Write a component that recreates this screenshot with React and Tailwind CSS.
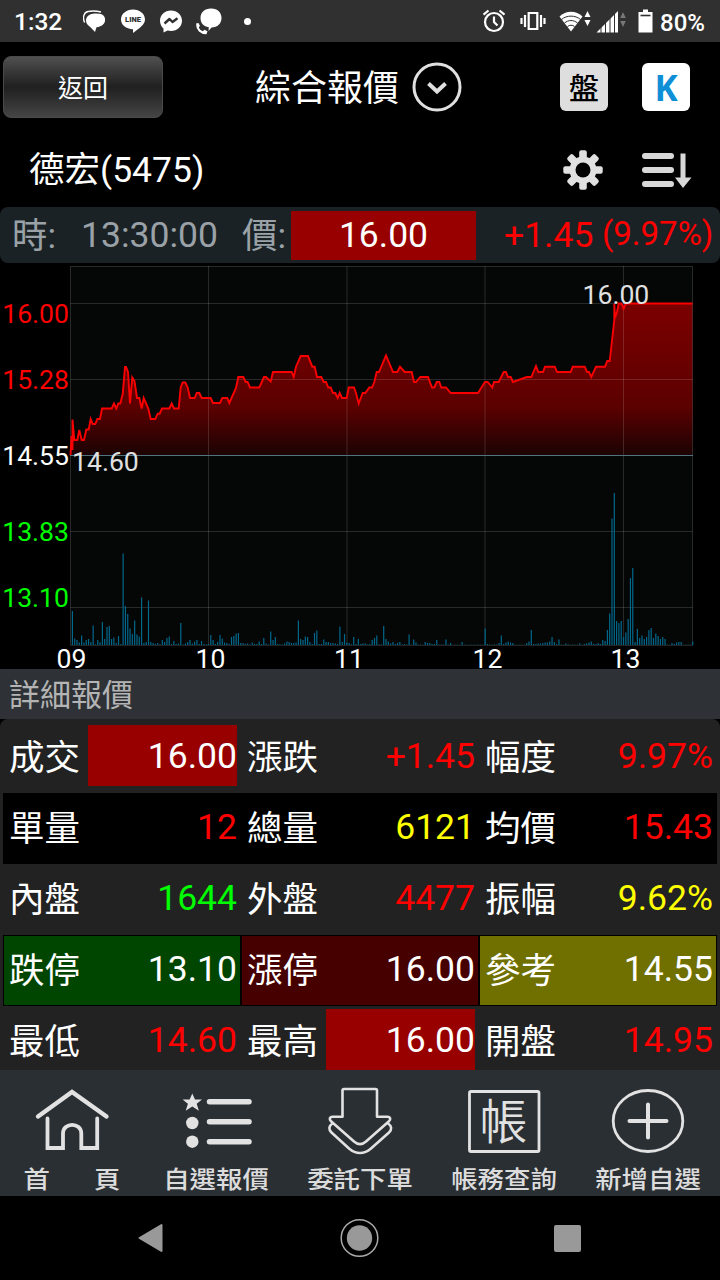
const FONT = "font-[Roboto,'Noto_Sans_CJK_TC',sans-serif]";

const PRICE_LINE =
  '70.5,455 71.5,436 72.5,450 72.5,419.5 74.3,440 77.3,440 79.3,430 81.7,440 84,440 86.3,429.5 88.7,429.5 90.7,419 92.7,424 95.3,424 97.3,419 100,419 ' +
  '102,408.5 111.7,408.5 114,403.5 116.3,408.5 118.3,403.5 120.3,403.5 122.7,394 125,367 126,367 128,372 130,403.5 132.3,377.5 134.5,381 137,398 139.3,398 ' +
  '141.7,408.5 143.7,398 148.3,408.5 150.7,419 155.3,419 157.7,413.7 159.7,413.7 162,408.5 169.3,408.5 171.7,403.5 174,408.5 178.7,408.5 180.7,387.5 ' +
  '182.7,382.5 185.3,382.5 187.7,387.5 190,398 194.7,398 196.7,393 199.3,393 201.7,398 210.7,398 213,403 220,403 222.3,398 227.3,398 229.3,403 236,388 ' +
  '238.3,377 243.3,377 245.7,382 247.7,382 250,387.5 259.3,387.5 264,377 266,377 270.7,381.5 273,372 291.7,372 293.7,377 296,366.7 300.7,356 308,356 ' +
  '312.3,366.7 314.7,366.7 317,377 321.3,377 323.7,382 326,382 328.3,387.5 330.7,387.5 333,393 335.3,393 337.7,398 339.7,393 342,398 346.7,398 ' +
  '348.7,387.5 354,387.5 356,393 358.7,403.5 360,400 362.7,393 365.3,393 369.3,387.5 372,387.5 374.3,382 376.7,372 379,372 386,355.5 393,372 397.3,372 ' +
  '400,366.7 404.7,372 411.7,372 414,382 416,382 420.3,377 428,377 432,387.5 434.3,387.5 436.7,382 439.3,382 441.3,387.5 446,387.5 450.7,393 478,393 ' +
  '485,382 487.7,382 492.3,387.5 494,382 498.7,382 503.7,372 506,372 508,377 510.7,377 513,382 526.7,377 531.3,377 536,366 538.3,372 543,372 545,366.7 ' +
  '554.7,366.7 557,372 570.7,372 572.7,366.7 584.7,366.7 587,372 589,372 591.3,377 596,366.7 605,366.7 607.3,361 609.7,361 614.3,320 614.3,303.5 ' +
  '615,318 617,311.7 618.7,303.5 621.5,303.5 623.7,308.5 625.7,303.5 692.5,303.5';

// one value per minute, 09:01 to 13:30
const VOLUME = [
  34, 6.5, 5, 2.5, 9.5, 2.5, 5, 6, 3, 19.5, 0.7, 5, 2.7, 23, 6, 18, 19, 6, 7.5, 2,
  9, 1, 91.5, 39, 31, 16.5, 11, 24.5, 10.5, 8.5, 47.5, 2, 3, 44.5, 3, 2, 1, 2, 0.7, 5,
  3, 7, 8.5, 1, 4, 1, 1.5, 22, 0.5, 1.5, 3, 5, 1.5, 3.3, 5, 1, 4, 1, 0.7, 1,
  10, 5, 1, 3, 10, 6.5, 2.5, 2, 1, 8, 9, 11.5, 12, 2, 2, 1, 1.5, 0.5, 2.5, 1,
  1, 3.5, 1, 7, 1.5, 0.5, 13.5, 5, 8, 1, 0.7, 0.5, 1.5, 3.5, 3, 2, 2, 2.5, 24.5, 6,
  5, 8.5, 8, 3, 1, 12, 14.5, 1, 1, 5.5, 3, 3, 2, 2, 1.5, 1, 18.5, 3, 11, 2.5,
  2, 0.7, 8, 1, 6, 1, 1.5, 1.5, 0.5, 1, 5, 7, 9.5, 0.7, 0.5, 19, 6, 3.5, 1.5, 3,
  1, 2, 3, 0.5, 1, 0.5, 10.5, 0.5, 5.5, 2.5, 0.5, 0.5, 0.3, 3, 2, 2, 1, 1, 5, 0.5,
  0.5, 0.5, 5.5, 0.5, 2, 0.3, 0.3, 0.3, 0.3, 3, 0.3, 0.3, 0.3, 0.3, 0.3, 0.3, 0.5, 0.3, 0.3, 16.5,
  1, 0.5, 0.3, 0.7, 0.5, 2, 9.5, 1, 2.5, 3.5, 2.5, 2, 0.3, 0.3, 0.3, 0.3, 0.3, 2, 3.5, 15,
  1, 1, 1.5, 1.5, 2, 2.5, 2.5, 3.5, 8, 3, 1, 5.5, 0.5, 0.3, 1.5, 0.7, 0.3, 0.5, 0.3, 0.3,
  1.5, 0.3, 1, 1.5, 2.5, 3.5, 1, 1, 2, 1, 5, 4, 15, 31.5, 126.5, 152, 24, 22, 24, 8,
  12.5, 26, 67, 77, 3, 16, 7, 9.5, 6, 8, 15, 17, 7, 11.5, 9, 6, 8, 6, 0.5, 0.3,
  2, 1, 2.5, 3, 3, 0.3, 0.3, 0.3, 0.3, 3.5,
];

const PRICE_LABELS = [
  { text: '16.00', y: 323.3, color: '#ff0000' },
  { text: '15.28', y: 389, color: '#ff0000' },
  { text: '14.55', y: 465.3, color: '#ffffff' },
  { text: '13.83', y: 540.5, color: '#00ff00' },
  { text: '13.10', y: 607.3, color: '#00ff00' },
];

const HOURS = [
  { text: '09', x: 71.5 },
  { text: '10', x: 210.5 },
  { text: '11', x: 349 },
  { text: '12', x: 487.5 },
  { text: '13', x: 625.5 },
];

const RED = 'text-[#ff0000]';
const GREEN = 'text-[#00ff00]';
const YELLOW = 'text-[#ffff00]';
const WHITE = 'text-white';

const ROWS = [
  [
    { label: '成交', value: '16.00', color: WHITE, hit: true },
    { label: '漲跌', value: '+1.45', color: RED },
    { label: '幅度', value: '9.97%', color: RED },
  ],
  [
    { label: '單量', value: '12', color: RED },
    { label: '總量', value: '6121', color: YELLOW },
    { label: '均價', value: '15.43', color: RED },
  ],
  [
    { label: '內盤', value: '1644', color: GREEN },
    { label: '外盤', value: '4477', color: RED },
    { label: '振幅', value: '9.62%', color: YELLOW },
  ],
  [
    { label: '跌停', value: '13.10', color: WHITE, bg: 'bg-[#004500]' },
    { label: '漲停', value: '16.00', color: WHITE, bg: 'bg-[#460000]' },
    { label: '參考', value: '14.55', color: WHITE, bg: 'bg-[#707000]' },
  ],
  [
    { label: '最低', value: '14.60', color: RED },
    { label: '最高', value: '16.00', color: WHITE, hit: true },
    { label: '開盤', value: '14.95', color: RED },
  ],
];

function StatusBar() {
  return (
    <div className="h-[42px] shrink-0 bg-[#303030] flex items-center justify-between px-[14px] text-white font-medium">
      <div className="flex items-center">
        <span className="text-[24.5px] leading-none w-[69px] pt-[3px]">1:32</span>
        <svg width="23" height="23" viewBox="0 0 23 23" fill="#fff">
          <path d="M1.600 12.500C-.5 8 .5 2.500 5 1.500c4-.8 8-.8 13 .5" fill="none" stroke="#fff" strokeWidth="1.400" />
          <path d="M10 3.700c2.500-.5 5.500-.4 8 .4 3 1 4.300 3.600 4.100 6.200-.2 3.300-3 6.400-8.600 7l-1.500 4.700-4.800-5C4.500 15.300 3 13.400 3 10.600c0-3.600 2.700-6.400 7-6.900z" />
        </svg>
        <svg width="26" height="26" viewBox="0 0 26 26" className="ml-[14px]">
          <path d="M13 1.500c6.800 0 12 4.400 12 10 0 5-5.500 8.800-12 13.500v-3.800C6 21 1 17 1 11.500c0-5.600 5.200-10 12-10z" fill="#fff" />
          <text x="13" y="14.200" textAnchor="middle" fontSize="7.500" fontWeight="900" fill="#303030">LINE</text>
        </svg>
        <svg width="24" height="24" viewBox="0 0 24 24" className="ml-[13px]">
          <path d="M12 1.500c6.300 0 11 4.500 11 10.300S18.300 22 12 22c-1.200 0-2.300-.2-3.400-.5L4.500 23.500v-4C2.300 17.600 1 15 1 11.800 1 6 5.700 1.500 12 1.500z" fill="#fff" />
          <path d="M5.500 14.500l5-4.500 3 3 5-3.700" fill="none" stroke="#303030" strokeWidth="2.400" strokeLinejoin="round" />
        </svg>
        <svg width="28" height="28" viewBox="0 0 28 28" className="ml-[12px]">
          <path d="M16 1.500h.5c6 0 10 4 10 9.500s-4 9.500-10 9.500l-3 3.500.3-3.700C8.500 19.500 5.500 16 5.500 11c0-5.500 4-9.500 10.500-9.500z" fill="#fff" />
          <path d="M2.300 17.500c0 5 3.500 8.500 9 8.500" fill="none" stroke="#fff" strokeWidth="2.400" />
          <path d="M1 16.500l2.500-.5 1.500 3-2 2zM7.500 24.500l2-1.700 3 1.500-1 2.700z" fill="#fff" />
        </svg>
        <span className="ml-[21px] size-[7px] rounded-full bg-white" />
      </div>
      <div className="flex items-center">
        <svg width="24" height="24" viewBox="0 0 24 24" fill="none" stroke="#fff" strokeWidth="2.200">
          <circle cx="12" cy="13" r="9" />
          <path d="M12 7.500V13l3.500 3.500M1.500 5.700L6.500 1.500M22.500 5.700L17.500 1.500" />
        </svg>
        <svg width="26" height="20" viewBox="0 0 26 20" fill="none" stroke="#fff" strokeWidth="2.200" className="ml-[14px]">
          <path d="M8.700 2h8.600v16H8.700zM5 4v12M1.500 7v6M21 4v12M24.500 7v6" />
        </svg>
        <svg width="32" height="22" viewBox="0 0 32 22" className="ml-[13px]">
          <path d="M12 21.500L0.500 6.500C6.500 0 17.500 0 23.500 6.500z" fill="#fff" />
          <path d="M2.500 9.500c5-4.500 14-4.500 19 0M5.500 13c4-3.300 9-3.300 13 0M8.500 16.500c2-1.700 5-1.700 7 0" fill="none" stroke="#303030" strokeWidth="1" />
          <path d="M28.500 1l3 6h-6zM28.500 16l3-6h-6z" fill="#fff" />
        </svg>
        <svg width="30" height="23" viewBox="0 0 30 23" className="ml-[5px]">
          <path d="M0.500 22.500L22 1v21.500z" fill="#fff" />
          <path d="M5 10v13M9.500 8v15M14 4v19M18.500 2v21" stroke="#303030" strokeWidth="1" />
          <path d="M27 2l2.800 6h-5.600zM27 17l2.800-6h-5.600z" fill="#777" />
        </svg>
        <svg width="15" height="24" viewBox="0 0 15 24" className="ml-[12px]">
          <path d="M5 0.500h5V3h4.500v20.500h-14V3H5z" fill="#fff" />
          <path d="M2.500 6.500h10" stroke="#303030" strokeWidth="1.600" />
        </svg>
        <span className="ml-[7px] mr-px text-[24px] leading-none pt-[3px]">80%</span>
      </div>
    </div>
  );
}

function Header() {
  return (
    <div className="h-[90px] shrink-0 flex items-center pl-[3px] pr-[30px] text-white">
      <button className="w-[160px] h-[62px] rounded-lg border border-[#4a4a4a] bg-linear-to-b from-[#505050] via-[#202020] to-[#454545] text-[25px] font-normal pt-[3px]">
        返回
      </button>
      <h1 className="ml-[92px] mt-[3px] text-[36px] leading-none">綜合報價</h1>
      <svg width="50" height="50" viewBox="0 0 50 50" fill="none" stroke="#e0e0e0" className="ml-[13px]">
        <circle cx="25" cy="25" r="23" strokeWidth="3" />
        <path d="M16.500 21.500l8.500 8 8.500-8" strokeWidth="4" />
      </svg>
      <div className="ml-auto size-[48px] rounded-md bg-[#dedede] text-black text-[30px] font-medium flex items-center justify-center leading-none pt-[3px]">
        盤
      </div>
      <div className="ml-[34px] size-[48px] rounded-md bg-white text-[#0f8fd6] text-[35px] font-bold font-['Open_Sans',sans-serif] flex items-center justify-center leading-none">
        K
      </div>
    </div>
  );
}

function StockTitle() {
  const teeth = [0, 45, 90, 135];
  return (
    <div className="h-[75px] shrink-0 flex items-center pl-[29px] pr-[28px] text-white">
      <h2 className="text-[35.500px] leading-none mt-[3px]">德宏(5475)</h2>
      <svg width="40" height="40" viewBox="-20 -20 40 40" className="ml-auto">
        {teeth.map((deg) => (
          <rect key={deg} x="-3.800" y="-19.700" width="7.600" height="39.400" rx="2" fill="#e0e0e0" transform={`rotate(${deg})`} />
        ))}
        <circle r="13.500" fill="#e0e0e0" />
        <circle r="7.500" fill="#000" />
      </svg>
      <svg width="51" height="38" viewBox="0 0 51 38" className="ml-[38px]">
        <path d="M4 5h26M4 19h26M4 33h26" stroke="#d8d8d8" strokeWidth="6" strokeLinecap="round" />
        <path d="M39.500 2.500h5v24h6l-8.500 10.500-8-10.500h5.500z" fill="#d8d8d8" />
      </svg>
    </div>
  );
}

function PriceBar() {
  return (
    <div className="h-[56px] shrink-0 rounded-lg bg-[#1b2226] flex items-center text-[35.500px] leading-none text-[#9aa2a8]">
      <span className="ml-[12px] w-[69px] pt-[3px]">時:</span>
      <span className="w-[161px] pt-[2px]">13:30:00</span>
      <span className="w-[49px] pt-[3px]">價:</span>
      <span className="w-[185px] h-[49px] pt-px bg-[#980000] text-white flex items-center justify-center">16.00</span>
      <span className="ml-[28px] w-[98px] pt-[2px] text-[#ff0000]">+1.45</span>
      <span className="text-[#ff0000] text-[33px] pb-1">(9.97%)</span>
    </div>
  );
}

function Chart() {
  return (
    <svg width="720" height="406" viewBox="0 263 720 406" className="shrink-0 block overflow-visible" fontSize="26.600">
      <defs>
        <linearGradient id="area" gradientUnits="userSpaceOnUse" x1="0" y1="303" x2="0" y2="455">
          <stop offset="0" stopColor="#7c0000" />
          <stop offset="0.680" stopColor="#5c0000" />
          <stop offset="1" stopColor="#1c0303" />
        </linearGradient>
      </defs>
      <rect x="70" y="266" width="623" height="379" fill="#050606" />
      <polygon points={`${PRICE_LINE} 692.5,455 70.5,455`} fill="url(#area)" />
      <path
        d="M70.500 266.500H692.500V645.500H70.500zM70.500 303.500H692.500M70.500 379.500H692.500M70.500 531.500H692.500M70.500 607.500H692.500M208.500 266V645M347 266V645M485 266V645M623.500 266V645"
        fill="none"
        stroke="#fff"
        strokeOpacity="0.140"
      />
      <path d="M70 455.500H693" stroke="#4f7480" />
      {VOLUME.map((v, i) => (
        <rect key={i} x={71.8 + i * 2.306} y={645 - v} width="1.200" height={v} fill="#00688c" />
      ))}
      <polyline points={PRICE_LINE} fill="none" stroke="#fa0000" strokeWidth="1.900" />
      {PRICE_LABELS.map((l) => (
        <text key={l.text} x="69" y={l.y} textAnchor="end" fill={l.color}>{l.text}</text>
      ))}
      <text x="72" y="470.500" fill="#e0e0e0">14.60</text>
      <text x="582.500" y="303.500" fill="#e0e0e0">16.00</text>
      {HOURS.map((h) => (
        <text key={h.text} x={h.x} y="667.500" textAnchor="middle" fill="#fff">{h.text}</text>
      ))}
    </svg>
  );
}

function QuoteTable() {
  return (
    <div className="h-[351px] shrink-0 overflow-hidden rounded-t-lg bg-[#222] px-[3px] pt-[3px]">
      {ROWS.map((row, i) => (
        <div key={i} className={`grid grid-cols-3 h-[71px] ${i === 1 ? 'bg-black' : ''}`}>
          {row.map((cell) => (
            <div
              key={cell.label}
              className={`flex items-center pr-[3px] text-[35.500px] leading-none border ${cell.bg ? `${cell.bg} border-black` : 'border-transparent'}`}
            >
              <span className="text-white w-[72px] ml-[5px] pt-[3px]">{cell.label}</span>
              <span
                className={`flex-1 ml-[7px] h-[61px] mb-1 pt-[2px] flex items-center justify-end ${cell.color} ${cell.hit ? 'bg-[#980000]' : ''}`}
              >
                {cell.value}
              </span>
            </div>
          ))}
        </div>
      ))}
    </div>
  );
}

function NavIcon({ name }) {
  return (
    <svg width="144" height="94" viewBox="0 0 144 94" fill="none" stroke="#e2e2e2" strokeWidth="3.500" strokeLinecap="round">
      {name === 'home' && (
        <>
          <path d="M38 46.500L72 22l34.500 24.500" strokeWidth="4.400" />
          <path d="M47.500 48.500V78H63V63.500c0-11.500 18.300-11.500 18.300 0V78h15.900V48.500" strokeWidth="3.800" />
        </>
      )}
      {name === 'list' && (
        <>
          <path d="M65.500 31.700H105M65.500 51.700H105M65.500 71.700H105" strokeWidth="5.500" />
          <path d="M48.300 23.500l2.700 6h7l-5.300 4.300 2.200 6.900-6.600-4.200-6.600 4.200 2.200-6.900-5.300-4.300h7z" fill="#e2e2e2" stroke="none" />
          <circle cx="48.300" cy="53" r="6.200" fill="#e2e2e2" stroke="none" />
          <circle cx="48.300" cy="71.700" r="6.200" fill="#e2e2e2" stroke="none" />
        </>
      )}
      {name === 'order' && (
        <g strokeWidth="2.600" strokeLinejoin="round">
          <path d="M54.500 46.700V20.500q0-1.500 1.500-1.500H87.500q1.500 0 1.500 1.500V46.700H99.500c3 0 3.500 3 1.500 4.500L78 71.500c-4 3.500-8 3.500-12 0L43 51.200c-2-1.700-1.500-4.500 1.500-4.500z" />
          <path d="M44.500 53.500c-4 2.500-4 6-1 9L61 78.500c7 6 15 6 22 0l18-16c3-3 3-6.500-1-9" />
        </g>
      )}
      {name === 'account' && (
        <>
          <rect x="37.500" y="21.500" width="69.500" height="60" rx="1.500" strokeWidth="2.800" />
          <text x="71.500" y="69" textAnchor="middle" fontSize="48" fontWeight="350" fill="#e2e2e2" stroke="none">帳</text>
        </>
      )}
      {name === 'add' && (
        <>
          <ellipse cx="72" cy="51" rx="34.800" ry="30.500" strokeWidth="2.800" />
          <path d="M53.500 51h37M72 34.500v33" strokeWidth="4" />
        </>
      )}
    </svg>
  );
}

const TABS = [
  { icon: 'home', label: ['首', '頁'] },
  { icon: 'list', label: ['自選報價'] },
  { icon: 'order', label: ['委託下單'] },
  { icon: 'account', label: ['帳務查詢'] },
  { icon: 'add', label: ['新增自選'] },
];

function TabBar() {
  return (
    <nav className="h-[126px] shrink-0 bg-[#2a2f33] grid grid-cols-5">
      {TABS.map((tab) => (
        <div key={tab.icon} className="flex flex-col items-center">
          <NavIcon name={tab.icon} />
          <div className="flex gap-[40px] scale-x-110 text-[24px] leading-[32px] font-medium text-[#dcdcdc]">
            {tab.label.map((part) => (
              <span key={part}>{part}</span>
            ))}
          </div>
        </div>
      ))}
    </nav>
  );
}

function SystemNav() {
  return (
    <div className="h-[84px] shrink-0 bg-black flex items-center justify-between pl-[138px] pr-[139px]">
      <svg width="26" height="30" viewBox="0 0 26 30">
        <path d="M1.500 15L23.500 2v26z" fill="#999" stroke="#999" strokeWidth="2" strokeLinejoin="round" />
      </svg>
      <svg width="40" height="40" viewBox="0 0 40 40">
        <circle cx="20.500" cy="20" r="18.300" fill="none" stroke="#aaa" strokeWidth="1.500" />
        <circle cx="20.500" cy="20" r="12.700" fill="#999" />
      </svg>
      <span className="size-[27px] rounded-xs bg-[#999]" />
    </div>
  );
}

export default function App() {
  return (
    <div className={`w-[720px] h-[1280px] overflow-hidden bg-black flex flex-col ${FONT}`}>
      <StatusBar />
      <Header />
      <StockTitle />
      <PriceBar />
      <Chart />
      <div className="h-[50px] shrink-0 bg-[#2e3236] flex items-center pl-[9px] pt-[2px] text-[31px] leading-none text-[#b4b4b4]">
        詳細報價
      </div>
      <QuoteTable />
      <TabBar />
      <SystemNav />
    </div>
  );
}
